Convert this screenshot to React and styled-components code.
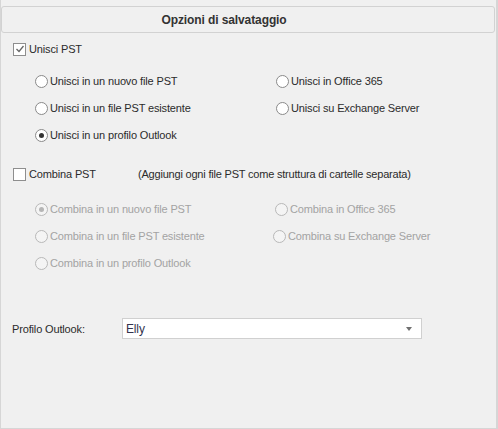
import React from "react";
import styled, { createGlobalStyle } from "styled-components";

const GlobalStyle = createGlobalStyle`
  html, body {
    margin: 0;
    padding: 0;
    background: #f0f0f0;
  }
  body {
    font-family: "Liberation Sans", Arial, sans-serif;
    font-size: 11px;
    letter-spacing: -0.15px;
    color: #2b2b2b;
  }
`;

const Panel = styled.div`
  box-sizing: border-box;
  width: 498px;
  height: 429px;
  background: #f0f0f0;
  border-left: 1px solid #d6d6d6;
  border-right: 2px solid #d6d6d6;
  border-bottom: 1px solid #d6d6d6;
  display: flex;
  flex-direction: column;
`;

const Header = styled.div`
  box-sizing: border-box;
  height: 27px;
  margin: 6px 1px 0 0;
  border: 1px solid #d2d2d2;
  border-radius: 3px;
  display: flex;
  align-items: center;
  justify-content: center;
  font-weight: bold;
  font-size: 12px;
  letter-spacing: -0.1px;
  color: #333;
  padding-right: 48px;
`;

const CheckRow = styled.div`
  display: flex;
  align-items: center;
  height: 16px;
  margin-top: ${({ top }) => top}px;
  padding-left: 12px;
`;

const Box = styled.span`
  box-sizing: border-box;
  width: 13px;
  height: 13px;
  border: 1px solid #8e8e8e;
  background: #fff;
  display: inline-flex;
  align-items: center;
  justify-content: center;
  margin-right: 3px;
  flex: none;
`;

const Label = styled.span`
  color: ${({ disabled }) => (disabled ? "#a3a3a3" : "#2b2b2b")};
  white-space: nowrap;
  min-width: ${({ width }) => (width ? `${width}px` : "auto")};
`;

const Note = styled.span`
  color: #2b2b2b;
  white-space: nowrap;
  letter-spacing: -0.2px;
`;

const OptionGrid = styled.div`
  display: grid;
  grid-template-columns: ${({ left }) => left}px 1fr;
  grid-auto-rows: 16px;
  row-gap: 11px;
  margin-top: ${({ top }) => top}px;
  padding-left: 34px;
`;

const Option = styled.label`
  display: flex;
  align-items: center;
  margin-left: ${({ shift }) => shift || 0}px;
`;

const Radio = styled.span`
  box-sizing: border-box;
  width: 13px;
  height: 13px;
  border-radius: 50%;
  border: 1px solid ${({ disabled }) => (disabled ? "#b8b8b8" : "#8a8a8a")};
  background: ${({ disabled }) => (disabled ? "#f4f4f4" : "#fff")};
  display: inline-flex;
  align-items: center;
  justify-content: center;
  margin-right: 2px;
  flex: none;

  &::after {
    content: "";
    display: ${({ checked }) => (checked ? "block" : "none")};
    width: 5px;
    height: 5px;
    border-radius: 50%;
    background: ${({ disabled }) => (disabled ? "#b5b5b5" : "#333")};
  }
`;

const ProfileRow = styled.div`
  display: flex;
  align-items: center;
  margin-top: 47px;
  padding-left: 11px;
`;

const ProfileLabel = styled.span`
  width: 110px;
  color: #2b2b2b;
`;

const Select = styled.div`
  box-sizing: border-box;
  width: 300px;
  height: 21px;
  background: #fff;
  border: 1px solid #d0d0d0;
  display: flex;
  align-items: center;
  justify-content: space-between;
  padding: 0 9px 0 3px;
  color: #33334d;
  font-size: 12px;
`;

const Caret = styled.span`
  width: 0;
  height: 0;
  border-left: 3px solid transparent;
  border-right: 3px solid transparent;
  border-top: 4px solid #707070;
`;

const Check = () => (
  <svg width="10" height="10" viewBox="0 0 10 10">
    <path d="M1.5 5 L4 7.5 L8.5 2" fill="none" stroke="#666" strokeWidth="1.3" />
  </svg>
);

const Opt = ({ children, checked, disabled, shift }) => (
  <Option shift={shift}>
    <Radio checked={checked} disabled={disabled} />
    <Label disabled={disabled}>{children}</Label>
  </Option>
);

export default function App() {
  return (
    <>
      <GlobalStyle />
      <Panel>
        <Header>Opzioni di salvataggio</Header>

        <CheckRow top={8}>
          <Box>
            <Check />
          </Box>
          <Label>Unisci PST</Label>
        </CheckRow>

        <OptionGrid top={16} left={241}>
          <Opt>Unisci in un nuovo file PST</Opt>
          <Opt>Unisci in Office 365</Opt>
          <Opt>Unisci in un file PST esistente</Opt>
          <Opt>Unisci su Exchange Server</Opt>
          <Opt checked>Unisci in un profilo Outlook</Opt>
        </OptionGrid>

        <CheckRow top={23}>
          <Box />
          <Label width={109}>Combina PST</Label>
          <Note>(Aggiungi ogni file PST come struttura di cartelle separata)</Note>
        </CheckRow>

        <OptionGrid top={19} left={240}>
          <Opt checked disabled>
            Combina in un nuovo file PST
          </Opt>
          <Opt disabled>Combina in Office 365</Opt>
          <Opt disabled>Combina in un file PST esistente</Opt>
          <Opt disabled shift={-2}>
            Combina su Exchange Server
          </Opt>
          <Opt disabled>Combina in un profilo Outlook</Opt>
        </OptionGrid>

        <ProfileRow>
          <ProfileLabel>Profilo Outlook:</ProfileLabel>
          <Select>
            <span>Elly</span>
            <Caret />
          </Select>
        </ProfileRow>
      </Panel>
    </>
  );
}
